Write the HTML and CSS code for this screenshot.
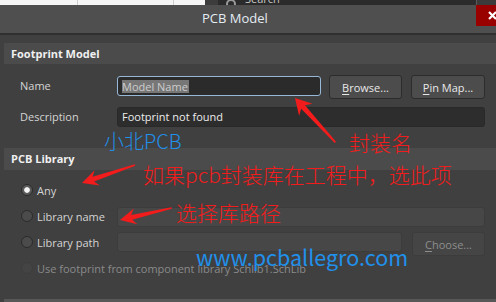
FILE: index.html
```html
<!DOCTYPE html>
<html>
<head>
  <meta charset="utf-8">
  <link rel="stylesheet" href="styles.css">
</head>
<body>
  <div class="screen">
    <div class="top-strip">
      <div class="sheet"></div>
      <div class="panel-edge"></div>
      <div class="search"><span class="search-icon"></span>Search</div>
      <div class="scroll-edge"></div>
    </div>

    <div class="titlebar">
      <span class="title">PCB Model</span>
      <div class="close">
        <svg width="9" height="9" viewBox="0 0 9 9">
          <path d="M1 1 L8 8 M8 1 L1 8" stroke="#fff" stroke-width="2.2" fill="none"/>
        </svg>
      </div>
    </div>

    <div class="content">
      <div class="section-head">Footprint Model</div>

      <div class="row row-name">
        <span class="field-label">Name</span>
        <div class="input focused"><span class="selected">Model Name</span></div>
        <button class="btn btn-browse"><u>B</u>rowse...</button>
        <button class="btn btn-pinmap"><u>P</u>in Map...</button>
      </div>

      <div class="row row-desc">
        <span class="field-label">Description</span>
        <div class="input wide">Footprint not found</div>
      </div>

      <div class="section-head section-lib">PCB Library</div>

      <div class="options">
        <div class="row opt">
          <span class="opt-label"><span class="radio checked"></span>Any</span>
        </div>
        <div class="row opt">
          <span class="opt-label"><span class="radio"></span>Library name</span>
          <div class="input disabled wide lib-name"></div>
        </div>
        <div class="row opt">
          <span class="opt-label"><span class="radio"></span>Library path</span>
          <div class="input disabled lib-path"></div>
          <button class="btn btn-choose" disabled><u>C</u>hoose...</button>
        </div>
        <div class="row opt opt-off">
          <span class="opt-label"><span class="radio off"></span>Use footprint from component library Schlib1.SchLib</span>
        </div>
      </div>

      <div class="foot-line"></div>
    </div>

    <!-- annotations drawn over the dialog -->
    <svg class="arrows" width="496" height="302" viewBox="0 0 496 302">
      <polygon points="0,0 16,-9 12,-2.6 60,-0.9 60,0.9 12,2.6 16,9" transform="translate(295 98) rotate(47.7)"/>
      <polygon points="0,0 16,-8 12,-2.4 56,-0.8 56,0.8 12,2.4 16,8" transform="translate(82 183) rotate(-18.8)"/>
      <polygon points="0,0 16,-8 12,-2.4 53,-0.8 53,0.8 12,2.4 16,8" transform="translate(120 220) rotate(-13)"/>
    </svg>
    <span class="note blue note-brand">小北PCB</span>
    <span class="note red note-name">封装名</span>
    <span class="note red note-any">如果pcb封装库在工程中，选此项</span>
    <span class="note red note-path">选择库路径</span>
    <span class="note blue note-site">www.pcballegro.com</span>
  </div>
</body>
</html>
```

FILE: styles.css
```css
* {
  box-sizing: border-box;
  margin: 0;
  padding: 0;
}

body {
  background: #404040;
  font-family: "Open Sans", "Noto Sans", sans-serif;
  font-size: 11px;
  color: #d4d4d4;
  overflow: hidden;
}

.screen {
  width: 496px;
  height: 302px;
  position: relative;
  overflow: hidden;
}

/* strip of the window behind the dialog */
.top-strip {
  display: flex;
  height: 5px;
  overflow: hidden;
}

.sheet {
  width: 205px;
  background:
    linear-gradient(to right, transparent 77px, #cfcfcf 77px, #cfcfcf 78px, transparent 78px),
    linear-gradient(to right, transparent 173px, #cfcfcf 173px, #cfcfcf 174px, transparent 174px),
    #f6f6f6;
}

.panel-edge {
  width: 13px;
  background: #3c3c3c;
}

.search {
  flex: 1;
  display: flex;
  gap: 9px;
  padding-left: 8px;
  background: #2b2b2b;
  color: #c8c8c8;
  font-size: 11px;
  line-height: 12px;
  align-items: flex-end;
  height: 5px;
}

.search-icon {
  width: 10px;
  height: 10px;
  border: 2px solid #9a9a9a;
  border-radius: 50%;
  margin-bottom: -4px;
  flex: none;
}

.scroll-edge {
  width: 20px;
  background: #3b3b3b;
  border-left: 1px solid #5a5a5a;
}

/* dialog */
.titlebar {
  display: flex;
  height: 30px;
  background: #4f4f4f;
  border-bottom: 2px solid #2f2f2f;
}

.title {
  margin-left: 202px;
  font-size: 13px;
  line-height: 26px;
  color: #e4ecf3;
}

.close {
  margin-left: auto;
  margin-right: -12px;
  width: 32px;
  height: 21px;
  background: #990000;
  display: flex;
  align-items: center;
  justify-content: center;
}

.content {
  padding: 8px 0 0 4px;
}

.section-head {
  height: 21px;
  line-height: 21px;
  padding-left: 7px;
  background: #4b4b4b;
  font-weight: 700;
  color: #f0f0f0;
}

.section-lib {
  margin-top: 21px;
  height: 22px;
  line-height: 22px;
}

.row {
  display: flex;
  align-items: flex-start;
  padding: 0 11px 0 16px;
}

.field-label {
  width: 97px;
  flex: none;
}

.row-name {
  margin-top: 11px;
  height: 24px;
}

.row-name .field-label {
  line-height: 22px;
}

.row-desc {
  margin-top: 8px;
  height: 20px;
}

.row-desc .field-label {
  line-height: 20px;
}

.input {
  height: 20px;
  border-radius: 3px;
  background: #2d2d2d;
  border: 1px solid #292929;
  padding-left: 4px;
  line-height: 18px;
  color: #ececec;
  white-space: nowrap;
}

.input.focused {
  width: 204px;
  margin-top: 1px;
  border-color: #98b8d8;
  background: #2b2b2b;
  display: flex;
  align-items: center;
}

.selected {
  background: #777;
  color: #cdcdcd;
  line-height: 13px;
  padding-right: 1px;
}

.input.wide {
  flex: 1;
}

.input.disabled {
  background: #474747;
  border-color: #3c3c3c;
}

.btn {
  height: 24px;
  border: 1px solid #2c2c2c;
  border-radius: 3px;
  background: #4c4c4c;
  color: #e8e8e8;
  font: inherit;
}

.btn u {
  text-underline-offset: 2px;
}

.btn-browse {
  width: 73px;
  margin-left: 8px;
}

.btn-pinmap {
  width: 74px;
  margin-left: 9px;
}

.options {
  margin-top: 7px;
}

.opt {
  height: 26px;
}

.opt-label {
  width: 97px;
  flex: none;
  display: flex;
  align-items: center;
  gap: 4px;
  height: 26px;
  white-space: nowrap;
}

.radio {
  width: 12px;
  height: 12px;
  margin-left: 1px;
  border-radius: 50%;
  background: #4b4b4b;
  border: 1px solid #2b2b2b;
  flex: none;
}

.radio.checked {
  background: radial-gradient(circle, #f4f4f4 0 2.4px, #5a5a5a 3.2px);
}

.radio.off {
  background: #444;
  border-color: #3d3d3d;
}

.opt-off {
  color: #8a8a8a;
}

.lib-name {
  margin-top: 4px;
}

.lib-path {
  width: 285px;
  margin-top: 3px;
}

.btn-choose {
  width: 73px;
  margin-left: 10px;
  margin-top: 3px;
  background: #454545;
  border-color: #3c3c3c;
  color: #8d8d8d;
}

.foot-line {
  margin-top: 18px;
  height: 3px;
  background: #575757;
}

/* annotations */
.arrows {
  position: absolute;
  left: 0;
  top: 0;
  fill: #f21c1c;
}

.note {
  position: absolute;
  font-family: "Noto Sans CJK SC", sans-serif;
  font-size: 21px;
  font-weight: 300;
  line-height: 1;
  white-space: nowrap;
}

.red {
  color: #f21c1c;
}

.blue {
  color: #2190ea;
}

.note-brand {
  left: 104px;
  top: 131px;
  font-size: 20px;
}

.note-name {
  left: 349px;
  top: 132px;
}

.note-any {
  left: 143px;
  top: 164px;
}

.note-path {
  left: 176px;
  top: 202px;
}

.note-site {
  left: 196px;
  top: 246px;
  font-size: 21.5px;
  font-weight: 400;
}
```
